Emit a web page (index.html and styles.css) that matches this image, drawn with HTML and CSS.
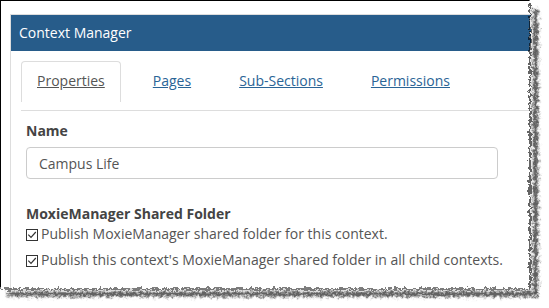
FILE: index.html
```html
<!DOCTYPE html>
<html lang="en">

<head>
    <title>Context Manager</title>
    <meta charset="UTF-8">
    <meta name="viewport" content="width=device-width, initial-scale=1">
    <link rel="stylesheet" href="styles.css">
</head>

<body>
    <div class="shot">
        <div class="frame">
            <div class="panel">
                <div class="panel-heading">Context Manager</div>
                <div class="panel-body">
                    <ul class="tabs">
                        <li class="tab active"><a href="#">Properties</a></li>
                        <li class="tab"><a href="#">Pages</a></li>
                        <li class="tab"><a href="#">Sub-Sections</a></li>
                        <li class="tab"><a href="#">Permissions</a></li>
                    </ul>
                    <div class="tab-content">
                        <label class="field-label" for="name">Name</label>
                        <input id="name" class="text-input" type="text" value="Campus Life">
                        <div class="section-label">MoxieManager Shared Folder</div>
                        <label class="check">
                            <svg class="box" width="12" height="12" viewBox="0 0 12 12">
                                <rect x="0.5" y="0.5" width="11" height="11" fill="#fff" stroke="#333" />
                                <path d="M2.3 5.6 L5 8.4 L9.8 3" fill="none" stroke="#333" stroke-width="1.2" />
                            </svg>
                            Publish MoxieManager shared folder for this context.
                        </label>
                        <label class="check">
                            <svg class="box" width="12" height="12" viewBox="0 0 12 12">
                                <rect x="0.5" y="0.5" width="11" height="11" fill="#fff" stroke="#333" />
                                <path d="M2.3 5.6 L5 8.4 L9.8 3" fill="none" stroke="#333" stroke-width="1.2" />
                            </svg>
                            Publish this context's MoxieManager shared folder in all child contexts.
                        </label>
                    </div>
                </div>
            </div>
        </div>
        <!-- torn paper edge of the screenshot -->
        <svg class="tear" width="549" height="308" viewBox="0 0 549 308">
            <defs>
                <filter id="rough" x="-20" y="-20" width="600" height="360" filterUnits="userSpaceOnUse">
                    <feTurbulence type="fractalNoise" baseFrequency="0.3" numOctaves="3" seed="7" />
                    <feDisplacementMap in="SourceGraphic" scale="7" xChannelSelector="R" yChannelSelector="G" />
                </filter>
                <filter id="soft" x="-20" y="-20" width="600" height="360" filterUnits="userSpaceOnUse">
                    <feGaussianBlur stdDeviation="1.6" />
                </filter>
            </defs>
            <g filter="url(#rough)">
                <path d="M530 -20 V289 H-20 V330 H570 V-20 Z" fill="#fff" />
                <path d="M535.5 9 V294 H7" fill="none" stroke="#4a4a4a" stroke-width="4.5" filter="url(#soft)" />
                <path d="M530 -20 V289 H-20" fill="none" stroke="#000" stroke-width="1.2" />
            </g>
        </svg>
    </div>
</body>

</html>
```

FILE: styles.css
```css
body {
    margin: 0;
    background: #fff;
    font-family: "Open Sans", "Liberation Sans", sans-serif;
    font-size: 14px;
    color: #555;
}

.shot {
    position: relative;
    width: 549px;
    height: 308px;
    overflow: hidden;
    background: #fff;
}

.frame {
    height: 100%;
    border-left: 1px solid #000;
    border-top: 1px solid #000;
    padding: 13px 0 0 9px;
    box-sizing: border-box;
}

.panel {
    width: 600px;
    height: 100%;
    border-left: 1px solid #ddd;
    border-top: 1px solid #ddd;
}

.panel-heading {
    height: 36px;
    line-height: 36px;
    padding-left: 8px;
    background: #275c8a;
    color: #fff;
}

.panel-body {
    padding: 10px 0 0 10px;
}

.tabs {
    display: flex;
    margin: 0;
    padding: 0 0 8px;
    list-style: none;
    border-bottom: 1px solid #ddd;
}

.tab {
    margin-right: 16px;
    padding: 0 15px 2px;
    line-height: 38px;
    border: 1px solid transparent;
    border-bottom: none;
    border-radius: 4px 4px 0 0;
}

.tab a {
    color: #2a6496;
}

.tab.active {
    border-color: #ddd;
}

.tab.active a {
    color: #555;
}

.tab-content {
    padding: 10px 0 0 5px;
}

.field-label,
.section-label {
    display: block;
    font-weight: bold;
    line-height: 20px;
    color: #444;
}

.text-input {
    display: block;
    width: 472px;
    height: 32px;
    box-sizing: border-box;
    margin-top: 6px;
    padding: 0 12px;
    border: 1px solid #ccc;
    border-radius: 4px;
    font: 14px "Open Sans", "Liberation Sans", sans-serif;
    color: #555;
}

.section-label {
    margin-top: 25px;
}

.check {
    display: flex;
    align-items: center;
    gap: 3px;
    line-height: 20px;
    margin-bottom: 6px;
}

.box {
    flex: none;
    margin-top: 1px;
}

.tear {
    position: absolute;
    left: 0;
    top: 0;
}
```
